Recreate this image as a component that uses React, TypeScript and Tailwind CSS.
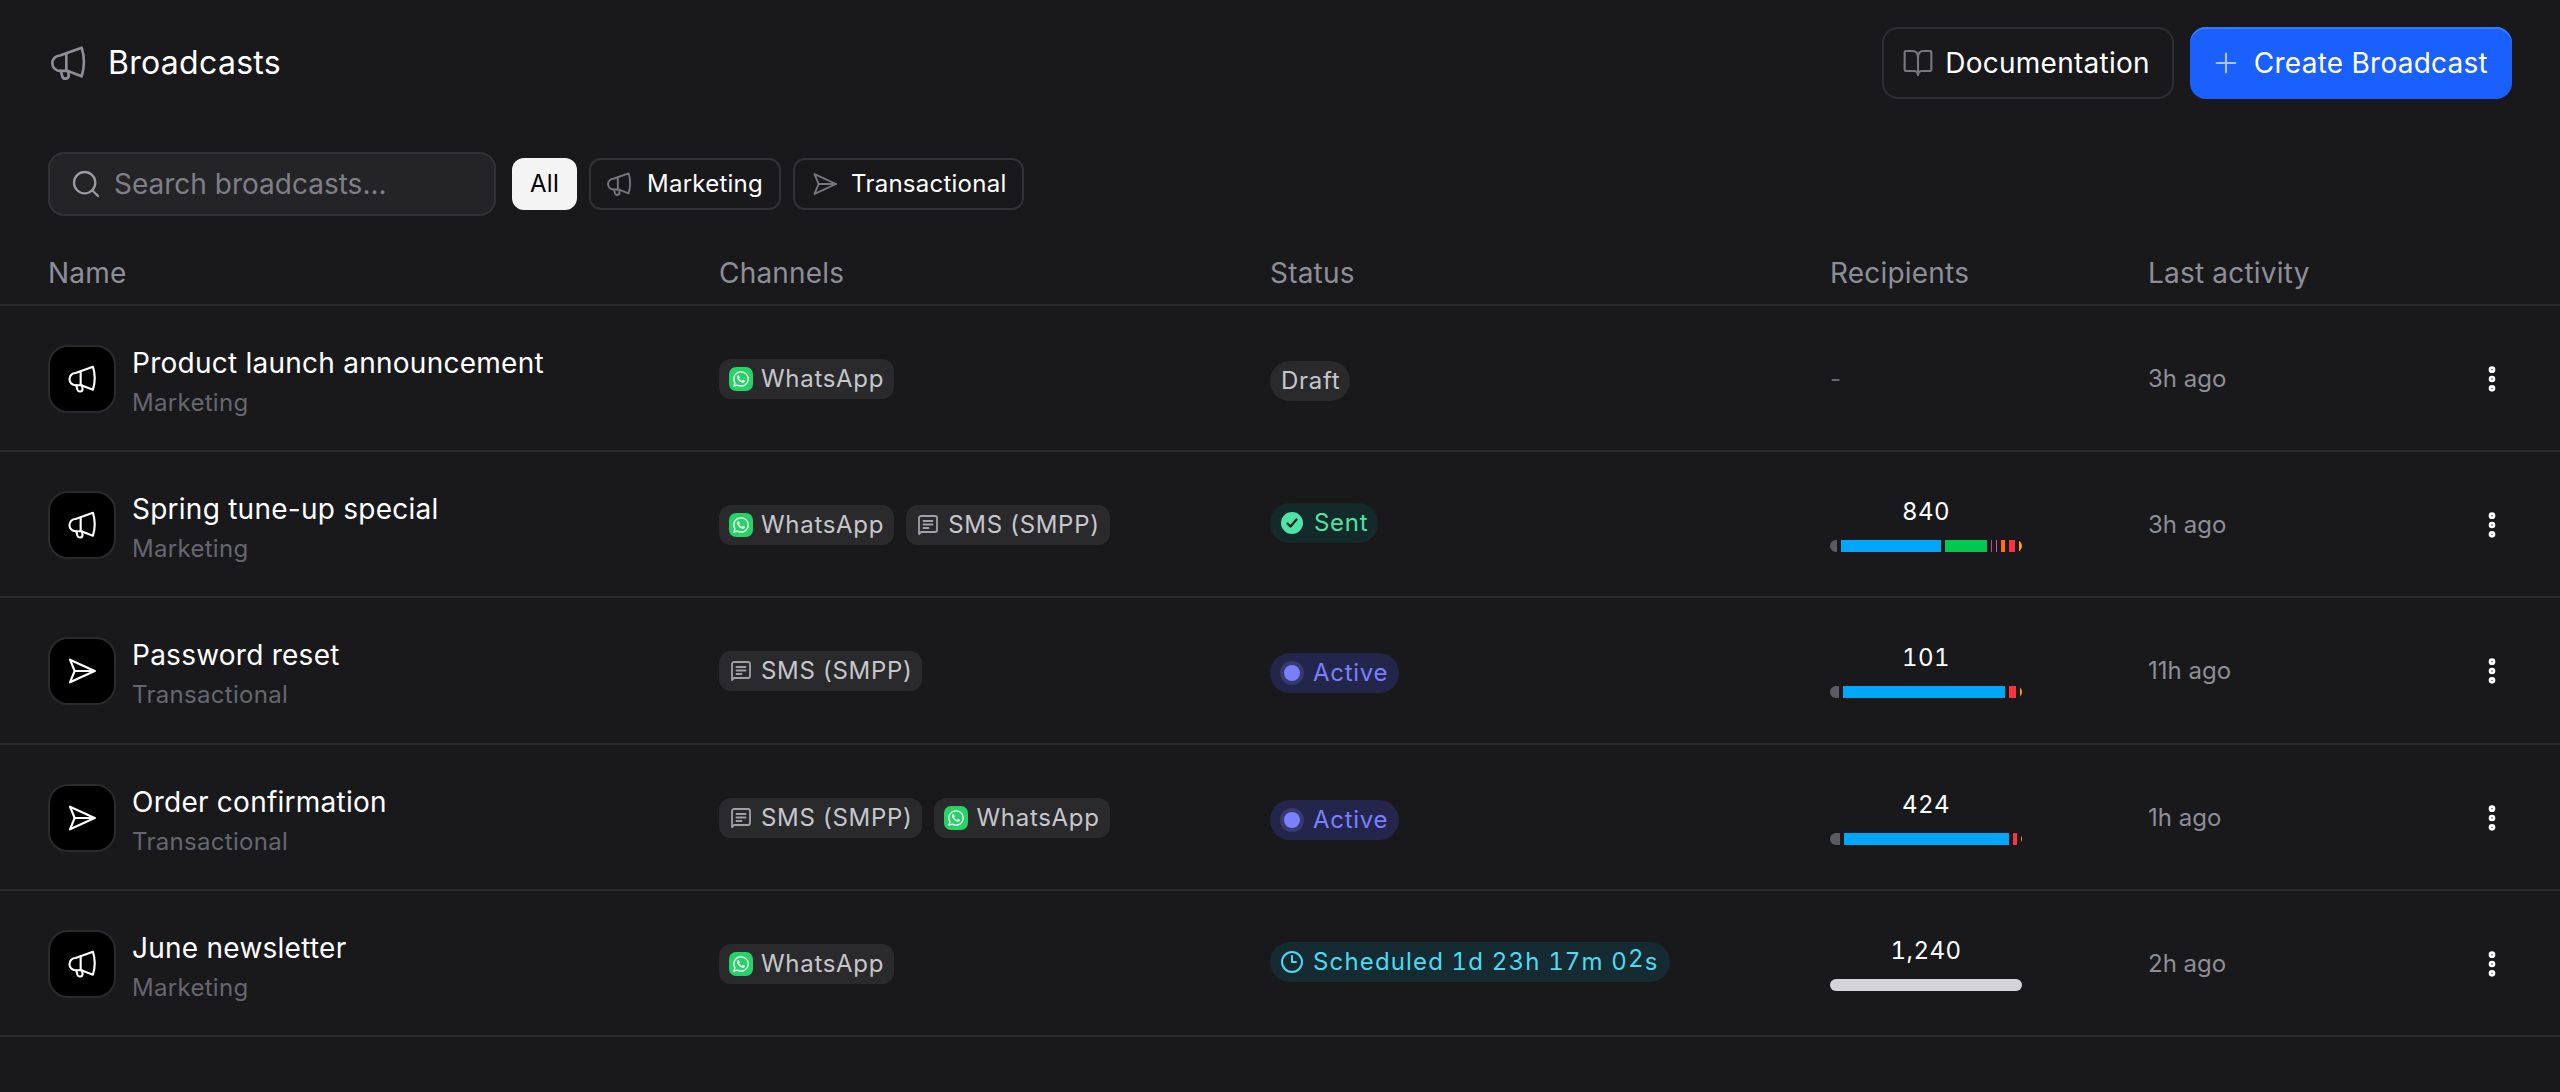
import { BookOpen, Clock3, EllipsisVertical, Plus, Search } from "lucide-react";
import { FaWhatsapp } from "react-icons/fa";

const gridCols = "grid grid-cols-[671px_551px_560px_318px_1fr_40px] items-center pl-12 pr-12";

type Segment = { color: string; width: number };
type Row = {
  name: string;
  kind: "Marketing" | "Transactional";
  channels: ("whatsapp" | "sms")[];
  status: "draft" | "sent" | "active" | "scheduled";
  recipients?: string;
  segments?: Segment[];
  time: string;
};

const rows: Row[] = [
  { name: "Product launch announcement", kind: "Marketing", channels: ["whatsapp"], status: "draft", time: "3h ago" },
  {
    name: "Spring tune-up special",
    kind: "Marketing",
    channels: ["whatsapp", "sms"],
    status: "sent",
    recipients: "840",
    segments: [
      { color: "#5b5b66", width: 7 },
      { color: "#00a6f8", width: 100 },
      { color: "#00c853", width: 42 },
      { color: "#e5387f", width: 1 },
      { color: "#c74bd0", width: 1 },
      { color: "#ff7300", width: 4 },
      { color: "#ff303f", width: 6 },
      { color: "#ff9f0a", width: 4 },
    ],
    time: "3h ago",
  },
  {
    name: "Password reset",
    kind: "Transactional",
    channels: ["sms"],
    status: "active",
    recipients: "101",
    segments: [
      { color: "#5b5b66", width: 9 },
      { color: "#00a6f8", width: 162 },
      { color: "#ff303f", width: 7 },
      { color: "#ff9f0a", width: 2 },
    ],
    time: "11h ago",
  },
  {
    name: "Order confirmation",
    kind: "Transactional",
    channels: ["sms", "whatsapp"],
    status: "active",
    recipients: "424",
    segments: [
      { color: "#5b5b66", width: 10 },
      { color: "#00a6f8", width: 165 },
      { color: "#ff303f", width: 4 },
      { color: "#ff9f0a", width: 1 },
    ],
    time: "1h ago",
  },
  {
    name: "June newsletter",
    kind: "Marketing",
    channels: ["whatsapp"],
    status: "scheduled",
    recipients: "1,240",
    segments: [{ color: "#d4d4d8", width: 192 }],
    time: "2h ago",
  },
];

const MegaphoneIcon = ({ className }: { className?: string }) => (
  <svg viewBox="0 0 24 24" fill="none" stroke="currentColor" strokeWidth="1.6" strokeLinecap="round" strokeLinejoin="round" className={className}>
    <path d="M7.200 7.500 20.200 2.800c1.800 5.600 1.800 11.400 0 17.200l-8.700-3.300H7.200a4.600 4.600 0 0 1 0-9.200Z" />
    <path d="M11 6.300v10.400" />
    <path d="m7.700 16.700.9 3.400c.6 2 3.900 1.500 3.800-.6l-.3-2.600" />
  </svg>
);

const SendIcon = ({ className }: { className?: string }) => (
  <svg viewBox="0 0 24 24" fill="none" stroke="currentColor" strokeWidth="1.6" strokeLinecap="round" strokeLinejoin="round" className={className}>
    <path d="M3 3.500 21.500 12 3 20.500 6.500 12 3 3.500Z" />
    <path d="M6.500 12h15" />
  </svg>
);

const SmsIcon = () => (
  <svg viewBox="0 0 24 24" fill="none" stroke="currentColor" strokeWidth="1.8" strokeLinecap="round" strokeLinejoin="round" className="h-6 w-6 text-[#a0a0a8]">
    <path d="M3 21V5a2 2 0 0 1 2-2h14a2 2 0 0 1 2 2v12a2 2 0 0 1-2 2H5l-2 2Z" />
    <path d="M7.500 8h9M7.500 11.500h9M7.500 15h5" />
  </svg>
);

const ChannelChip = ({ type }: { type: "whatsapp" | "sms" }) => (
  <div className="flex h-10 items-center gap-2 rounded-xl bg-[#2a2a2d] pl-[10px] pr-[10px] text-[24px] tracking-[0.7px] text-[#c6c6cc]">
    {type === "whatsapp" ? (
      <span className="flex h-6 w-6 items-center justify-center rounded-[7px] bg-[#25d366] text-white">
        <FaWhatsapp className="h-[18px] w-[18px]" />
      </span>
    ) : (
      <SmsIcon />
    )}
    <span>{type === "whatsapp" ? "WhatsApp" : "SMS (SMPP)"}</span>
  </div>
);

const StatusBadge = ({ status }: { status: Row["status"] }) => {
  if (status === "draft") {
    return <span className="mt-1 flex h-10 w-fit items-center rounded-full bg-[#2a2a2d] pl-[11px] pr-[10px] text-[24px] tracking-[0.7px] text-[#c6c6cc]">Draft</span>;
  }
  if (status === "sent") {
    return (
      <span className="-mt-1 flex h-10 w-fit items-center gap-[11px] rounded-full bg-[#14292a] pl-[11px] pr-[10px] text-[24px] tracking-[0.7px] text-[#4fe3a8]">
        <svg viewBox="0 0 22 22" className="h-[22px] w-[22px]">
          <circle cx="11" cy="11" r="11" fill="#4fe3a8" />
          <path d="m6.500 11.500 3 3 6-7" fill="none" stroke="#10201c" strokeWidth="2.200" strokeLinecap="round" strokeLinejoin="round" />
        </svg>
        Sent
      </span>
    );
  }
  if (status === "active") {
    return (
      <span className="mt-1 flex h-10 w-fit items-center gap-[9px] rounded-full bg-[#23264a] pl-[10px] pr-[11px] text-[24px] tracking-[0.7px] text-[#7a7fff]">
        <span className="flex h-6 w-6 items-center justify-center rounded-full bg-[#363a6c]">
          <span className="h-4 w-4 rounded-full bg-[#7a7fff]" />
        </span>
        Active
      </span>
    );
  }
  return (
    <span className="-mt-1 flex h-10 w-fit items-center gap-[9px] rounded-full bg-[#152a31] pl-[10px] pr-[11px] text-[24px] tracking-[1.15px] text-[#4fd9f1]">
      <Clock3 className="h-6 w-6" strokeWidth={2} />
      <span className="whitespace-pre tabular-nums">
        Scheduled 1d 23h 17m 0<span className="inline-block -translate-y-[3px]">2</span>s
      </span>
    </span>
  );
};

const RecipientBar = ({ segments }: { segments: Segment[] }) => (
  <div className="flex h-3 w-48 gap-1 overflow-hidden rounded-full">
    {segments.map((s, i) => (
      <div key={i} className="h-full shrink-0" style={{ width: s.width, backgroundColor: s.color }} />
    ))}
  </div>
);

export default function App() {
  return (
    <div className="min-h-screen bg-[#19191c] font-['Inter',sans-serif] text-white">
      <div className="flex items-center justify-between px-12 pt-[27px]">
        <div className="flex items-center gap-5">
          <MegaphoneIcon className="h-10 w-10 text-[#8e8e98]" />
          <h1 className="text-[32px] tracking-[0.3px]">Broadcasts</h1>
        </div>
        <div className="flex items-center gap-4">
          <button className="flex h-[72px] items-center gap-[11px] rounded-2xl border-2 border-[#2f2f33] pl-[18px] pr-[22px] text-[28px] tracking-[0.25px]">
            <BookOpen className="h-8 w-8 text-[#77777f]" strokeWidth={1.6} />
            Documentation
          </button>
          <button className="flex h-[72px] items-center gap-3 rounded-2xl bg-[#1a60ff] pl-5 pr-6 text-[28px] tracking-[0.25px] shadow-[inset_0_2px_0_#3a78ff]">
            <Plus className="h-8 w-8 text-[#a9c3ff]" strokeWidth={1.6} />
            Create Broadcast
          </button>
        </div>
      </div>

      <div className="mt-[53px] flex items-center px-12">
        <div className="flex h-16 w-[448px] items-center gap-3 rounded-2xl border-2 border-[#323236] bg-[#242427] pl-5 pr-3">
          <Search className="h-8 w-8 shrink-0 text-[#9a9aa2]" strokeWidth={1.7} />
          <input
            placeholder="Search broadcasts..."
            className="w-full bg-transparent text-[28px] text-white outline-none placeholder:text-[#7f7f88]"
          />
        </div>
        <div className="ml-4 flex items-center gap-3">
          <button className="h-[52px] w-[65px] rounded-xl bg-[#f4f4f5] text-[24px] tracking-[0.25px] text-black">All</button>
          <button className="flex h-[52px] items-center gap-[14px] rounded-xl border-2 border-[#323236] pl-[14px] pr-4 text-[24px] tracking-[0.25px]">
            <MegaphoneIcon className="h-7 w-7 text-[#77777f]" />
            Marketing
          </button>
          <button className="flex h-[52px] items-center gap-3 rounded-xl border-2 border-[#323236] pl-4 pr-4 text-[24px] tracking-[0.25px]">
            <SendIcon className="h-7 w-7 text-[#77777f]" />
            Transactional
          </button>
        </div>
      </div>

      <div className={`${gridCols} mt-6 h-[66px] border-b-2 border-[#2a2a2d] pt-[2px] text-[28px] tracking-[0.2px] text-[#8e8e98]`}>
        <div>Name</div>
        <div>Channels</div>
        <div>Status</div>
        <div>Recipients</div>
        <div>Last activity</div>
        <div />
      </div>

      {rows.map((row) => (
        <div key={row.name} className={`${gridCols} h-[146.200px] border-b-2 border-[#2a2a2d] pt-[2px]`}>
          <div className="flex items-center gap-4">
            <div className="flex h-[68px] w-[68px] items-center justify-center rounded-[20px] border-2 border-[#2a2a2d] bg-black">
              {row.kind === "Marketing" ? <MegaphoneIcon className="h-8 w-8 text-white" /> : <SendIcon className="h-8 w-8 text-white" />}
            </div>
            <div className="pt-2">
              <div className="text-[28px] leading-10 tracking-[0.25px]">{row.name}</div>
              <div className="text-[24px] leading-10 tracking-[0.3px] text-[#66666f]">{row.kind}</div>
            </div>
          </div>
          <div className="flex gap-3">
            {row.channels.map((c) => (
              <ChannelChip key={c} type={c} />
            ))}
          </div>
          <div>
            <StatusBadge status={row.status} />
          </div>
          <div>
            {row.segments ? (
              <div className="flex w-48 flex-col items-center gap-[10px] pb-1">
                <div className="text-[24px] leading-9 tabular-nums tracking-[0.5px]">{row.recipients}</div>
                <RecipientBar segments={row.segments} />
              </div>
            ) : (
              <div className="text-[24px] text-[#66666f]">-</div>
            )}
          </div>
          <div className="text-[24px] text-[#8e8e98]">{row.time}</div>
          <div className="flex justify-center">
            <EllipsisVertical className="h-8 w-8 text-white" strokeWidth={3} />
          </div>
        </div>
      ))}
    </div>
  );
}
